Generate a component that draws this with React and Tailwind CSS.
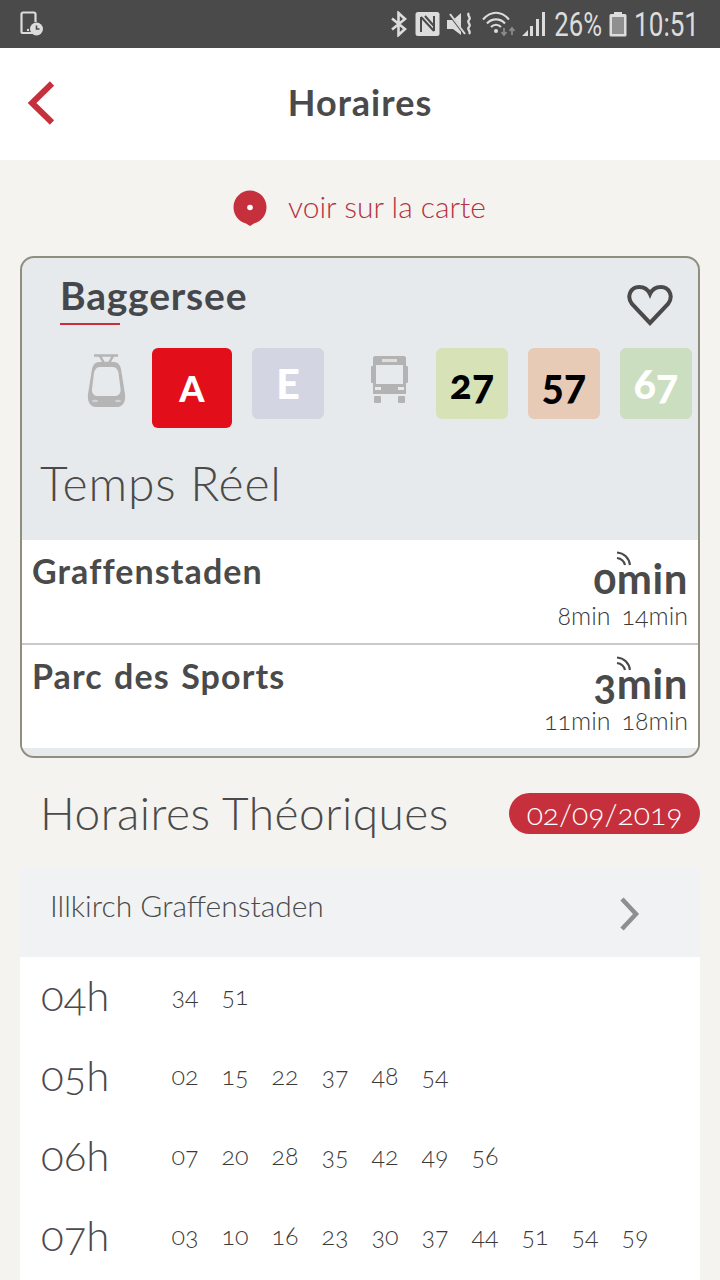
import React from 'react';

const rows = [
  ['04h', ['34', '51']],
  ['05h', ['02', '15', '22', '37', '48', '54']],
  ['06h', ['07', '20', '28', '35', '42', '49', '56']],
  ['07h', ['03', '10', '16', '23', '30', '37', '44', '51', '54', '59']],
];

function Rss() {
  return (
    <svg className="absolute right-[56px] -top-[7px] w-[16px] h-[16px]" viewBox="0 0 16 16" fill="none" stroke="#4a4a4a" strokeWidth="2.2">
      <path d="M1 1.5 C8 2 13 7 14 14" />
      <path d="M1 7 C5 7.5 8 10 9 14" />
    </svg>
  );
}

function Stop({ name, first, next, border }) {
  return (
    <div className={`h-[103px] bg-white flex justify-between pl-[10px] pr-[10px] ${border ? 'border-b-2 border-[#c9c9c9] h-[105px]' : ''}`}>
      <div className="text-[34px] font-bold leading-[40px] mt-[11px] text-[#4a4a4a] tracking-[1.1px] [word-spacing:2px]">{name}</div>
      <div className="flex flex-col items-end">
        <div className="relative text-[42px] font-bold leading-[40px] mt-[18px] text-[#4a4a4a] tracking-[0.6px] oldstyle-nums">
          {first}<Rss />
        </div>
        <div className="flex gap-[11px] text-[25px] leading-[30px] mt-[2px] font-light text-[#3a3a3a] oldstyle-nums">
          {next.map((n) => <span key={n}>{n}</span>)}
        </div>
      </div>
    </div>
  );
}

function Ticket({ label, bg, text, big }) {
  return (
    <div
      className={`${big ? 'w-[80px] h-[80px] rounded-[6px] text-[36px]' : 'w-[72px] h-[71px] rounded-[6px] text-[41px]'} ${bg} ${text} flex items-center justify-center font-black shrink-0 leading-none oldstyle-nums`}
    >
      {label}
    </div>
  );
}

export default function App() {
  return (
    <div className="w-[720px] h-[1280px] overflow-hidden bg-[#f4f3f0] font-['Lato','Open_Sans',sans-serif] text-[#4a4a4a]">
      {/* status bar */}
      <div className="h-[48px] bg-[#4a4a4a] flex items-center justify-between pl-[20px] pr-[21px] text-[#dcdcdc]">
        <svg width="24" height="26" viewBox="0 0 24 26" fill="none">
          <path d="M12 22H3a1.5 1.5 0 0 1-1.5-1.5V3A1.5 1.5 0 0 1 3 1.5h11A1.5 1.5 0 0 1 15.500 3v8" stroke="#dcdcdc" strokeWidth="2.200" />
          <circle cx="16.500" cy="18" r="6.500" fill="#dcdcdc" />
          <path d="M16.500 14.500V18h3" stroke="#4a4a4a" strokeWidth="1.600" fill="none" />
          <circle cx="8" cy="19" r="1.200" fill="#dcdcdc" />
        </svg>
        <div className="flex items-center">
          <svg width="18" height="26" viewBox="0 0 18 26" fill="none" stroke="#dcdcdc" strokeWidth="2.600" className="mr-[7px]">
            <path d="M2 7.500L15 18l-6.500 6V2L15 8 2 18.500" />
          </svg>
          <svg width="25" height="26" viewBox="0 0 25 26" className="mr-[7px]">
            <rect x="0.500" y="1" width="24" height="24" rx="2.500" fill="#dcdcdc" />
            <path d="M6 6v15M19 5v15M6 6l13 14M10 5l9 10" stroke="#4a4a4a" strokeWidth="2" fill="none" />
          </svg>
          <svg width="27" height="26" viewBox="0 0 27 26" className="mr-[8px]">
            <path d="M0 9h6l8-7v22l-8-6H0z" fill="#dcdcdc" />
            <path d="M3 4l15 20" stroke="#4a4a4a" strokeWidth="2.500" />
            <path d="M3 3l15 20" stroke="#dcdcdc" strokeWidth="2" />
            <path d="M22 2c-3 3 3 4 0 7s3 4 0 7 3 4 0 7" stroke="#dcdcdc" strokeWidth="2.200" fill="none" />
          </svg>
          <svg width="36" height="26" viewBox="0 0 36 26" fill="none" className="mr-[4px]">
            <path d="M1 8.500C9-.500 19-.500 27 8.500M5 12.500C10 7 18 7 23 12.500M9 16c3-3 7-3 10 0" stroke="#dcdcdc" strokeWidth="2.200" />
            <circle cx="14" cy="20" r="2" fill="#dcdcdc" />
            <path d="M22 17v7m-2.500-3l2.500 3 2.500-3M30 24v-7m-2.500 3l2.500-3 2.500 3" stroke="#8a8a8a" strokeWidth="1.800" />
          </svg>
          <svg width="24" height="26" viewBox="0 0 24 26" fill="#dcdcdc" className="mr-[9px]">
            <path d="M0 25l6-6v6zM8 25v-10h3v10zM14 25V8h3v17zM20 25V1h3v24z" />
          </svg>
          <span className="w-[47px] mr-[7px] flex justify-end whitespace-nowrap origin-right scale-x-[.78] text-[33px] leading-none font-['Roboto',sans-serif]">26%</span>
          <svg width="18" height="26" viewBox="0 0 18 26" className="mr-[9px]">
            <path d="M5 1h8v2h3a1.500 1.500 0 0 1 1.500 1.500V24a1.500 1.500 0 0 1-1.500 1.500H2A1.500 1.500 0 0 1 .5 24V4.500A1.500 1.500 0 0 1 2 3h3z" fill="#dcdcdc" />
            <rect x="3" y="6" width="12" height="17" fill="#8f8f8f" />
          </svg>
          <span className="w-[63px] flex justify-end whitespace-nowrap origin-right scale-x-[.79] text-[33px] leading-none font-['Roboto',sans-serif]">10:51</span>
        </div>
      </div>

      {/* header */}
      <div className="h-[112px] bg-white relative flex items-center justify-center pb-[4px]">
        <svg className="absolute left-[27px] top-[33px]" width="28" height="44" viewBox="0 0 28 44" fill="none" stroke="#c6303c" strokeWidth="6">
          <path d="M25 2.500L5 22l20 19.500" />
        </svg>
        <div className="text-[36px] font-bold tracking-[1px]">Horaires</div>
      </div>

      {/* map link */}
      <div className="h-[96px] flex items-center justify-center gap-[21px] pr-[1px]">
        <svg width="34" height="36" viewBox="0 0 34 36">
          <path d="M17 36l-4-2.600C5.500 31.500 0.500 25 .5 17 .5 8 8 .5 17 .5S33.500 8 33.500 17c0 8-5 14.500-12.500 16.400z" fill="#c6303c" />
          <circle cx="17" cy="17.500" r="2.800" fill="#fff" />
        </svg>
        <span className="text-[30px] font-light text-[#b53341] mb-[3px]">voir sur la carte</span>
      </div>

      {/* card */}
      <div className="mx-[20px] h-[502px] border-2 border-[#8f8f80] rounded-[14px] bg-[#e7eaed] overflow-hidden">
        <div className="h-[90px] flex justify-between pl-[38px] pr-[26px] relative">
          <div>
            <div className="text-[39px] font-bold leading-[46px] mt-[14px] text-[#45474b] tracking-[0.8px]">Baggersee</div>
            <div className="w-[60px] h-[2px] bg-[#c6303c] mt-[5px]" />
          </div>
          <svg className="mt-[26px] mr-[-1px]" width="46" height="42" viewBox="0 0 46 42" fill="none" stroke="#4a4a4a" strokeWidth="4">
            <path d="M23 39L5 20C-1 12 4 3 12 3c5 0 9 2.500 11 7 2-4.500 6-7 11-7 8 0 13 9 7 17z" />
          </svg>
        </div>

        <div className="h-[80px] flex items-start pl-[65px]">
          <svg className="mt-[6px] mr-[25px] shrink-0" width="40" height="54" viewBox="0 0 40 54">
            <path d="M12 8h15c4 0 6 3 7 7l4 25c1 7-2 13-8 13H9C3 53 0 47 1 40l4-25c1-4 3-7 7-7z" fill="#b5b5b5" />
            <path d="M13 13h13c3 0 5 3 5.500 6l2 16c.5 4-2 7-5 7H10c-3 0-5.500-3-5-7l2-16c.5-3 2.500-6 6-6z" fill="#e7eaed" />
            <path d="M7 1.500h24M13 2l4 7h5l4-7" fill="none" stroke="#b5b5b5" strokeWidth="2.500" />
            <ellipse cx="8" cy="47" rx="3" ry="1.200" fill="#d2d2d2" />
            <ellipse cx="31" cy="47" rx="3" ry="1.200" fill="#d2d2d2" />
          </svg>
          <Ticket label="A" big bg="bg-[#e20f1a]" text="text-white" />
          <div className="w-[20px] shrink-0" />
          <Ticket label="E" bg="bg-[#d4d5e3]" text="text-white" />
          <svg className="mt-[8px] ml-[46px] mr-[27px] shrink-0" width="39" height="48" viewBox="0 0 39 48">
            <path d="M3 2C3 1 4 0 5 0h29c1 0 2 1 2 2v36H3z" fill="#b3b3b3" />
            <rect x="1" y="10" width="37" height="17" rx="1" fill="#b3b3b3" />
            <path d="M3 36h33v2H3z" fill="#b3b3b3" />
            <rect x="4" y="40" width="7" height="7" rx="1" fill="#b3b3b3" />
            <rect x="28" y="40" width="7" height="7" rx="1" fill="#b3b3b3" />
            <rect x="6" y="9" width="27" height="19" fill="#e7eaed" />
            <rect x="12" y="3" width="15" height="3" fill="#dcdfe2" />
            <rect x="5" y="31" width="6" height="3" fill="#e7eaed" />
            <rect x="28" y="31" width="6" height="3" fill="#e7eaed" />
          </svg>
          <Ticket label="27" bg="bg-[#d7e2b7]" text="text-black" />
          <div className="w-[20px] shrink-0" />
          <Ticket label="57" bg="bg-[#e8cbb6]" text="text-black" />
          <div className="w-[20px] shrink-0" />
          <Ticket label="67" bg="bg-[#cbdfc0]" text="text-white" />
        </div>

        <div className="h-[112px] pl-[18px] pt-[25px] text-[48px] leading-[60px] font-light tracking-[0.8px]">Temps Réel</div>

        <Stop name="Graffenstaden" first="0min" next={['8min', '14min']} border />
        <Stop name="Parc des Sports" first="3min" next={['11min', '18min']} />
      </div>

      {/* theoretical */}
      <div className="h-[110px] flex items-center justify-between pl-[40px] pr-[20px]">
        <div className="text-[46px] font-light leading-[56px] tracking-[0.5px]">Horaires Théoriques</div>
        <div className="w-[191px] h-[41px] rounded-full bg-[#c6303c] text-white text-[30px] flex items-center justify-center font-light oldstyle-nums leading-none">02/09/2019</div>
      </div>

      <div className="mx-[20px] h-[89px] bg-[#f1f2f4] flex justify-between pl-[30px] pr-[60px] text-[#4a4a4a]">
        <div className="text-[30px] font-light leading-[36px] mt-[19px]">Illkirch Graffenstaden</div>
        <svg className="mt-[29px]" width="20" height="34" viewBox="0 0 20 34" fill="none" stroke="#8f8f8f" strokeWidth="4.500">
          <path d="M2 2l14 15L2 32" />
        </svg>
      </div>

      <div className="mx-[20px] bg-white h-[400px] pl-[21px] pt-[1px]">
        {rows.map(([h, mins]) => (
          <div key={h} className="h-[80px] pb-[5px] flex items-center">
            <div className="w-[119px] text-[42px] font-light oldstyle-nums">{h}</div>
            <div className="flex">
              {mins.map((m, i) => (
                <span key={i} className="w-[50px] text-center text-[25px] font-light text-[#3a3a3a] oldstyle-nums">{m}</span>
              ))}
            </div>
          </div>
        ))}
      </div>
    </div>
  );
}
